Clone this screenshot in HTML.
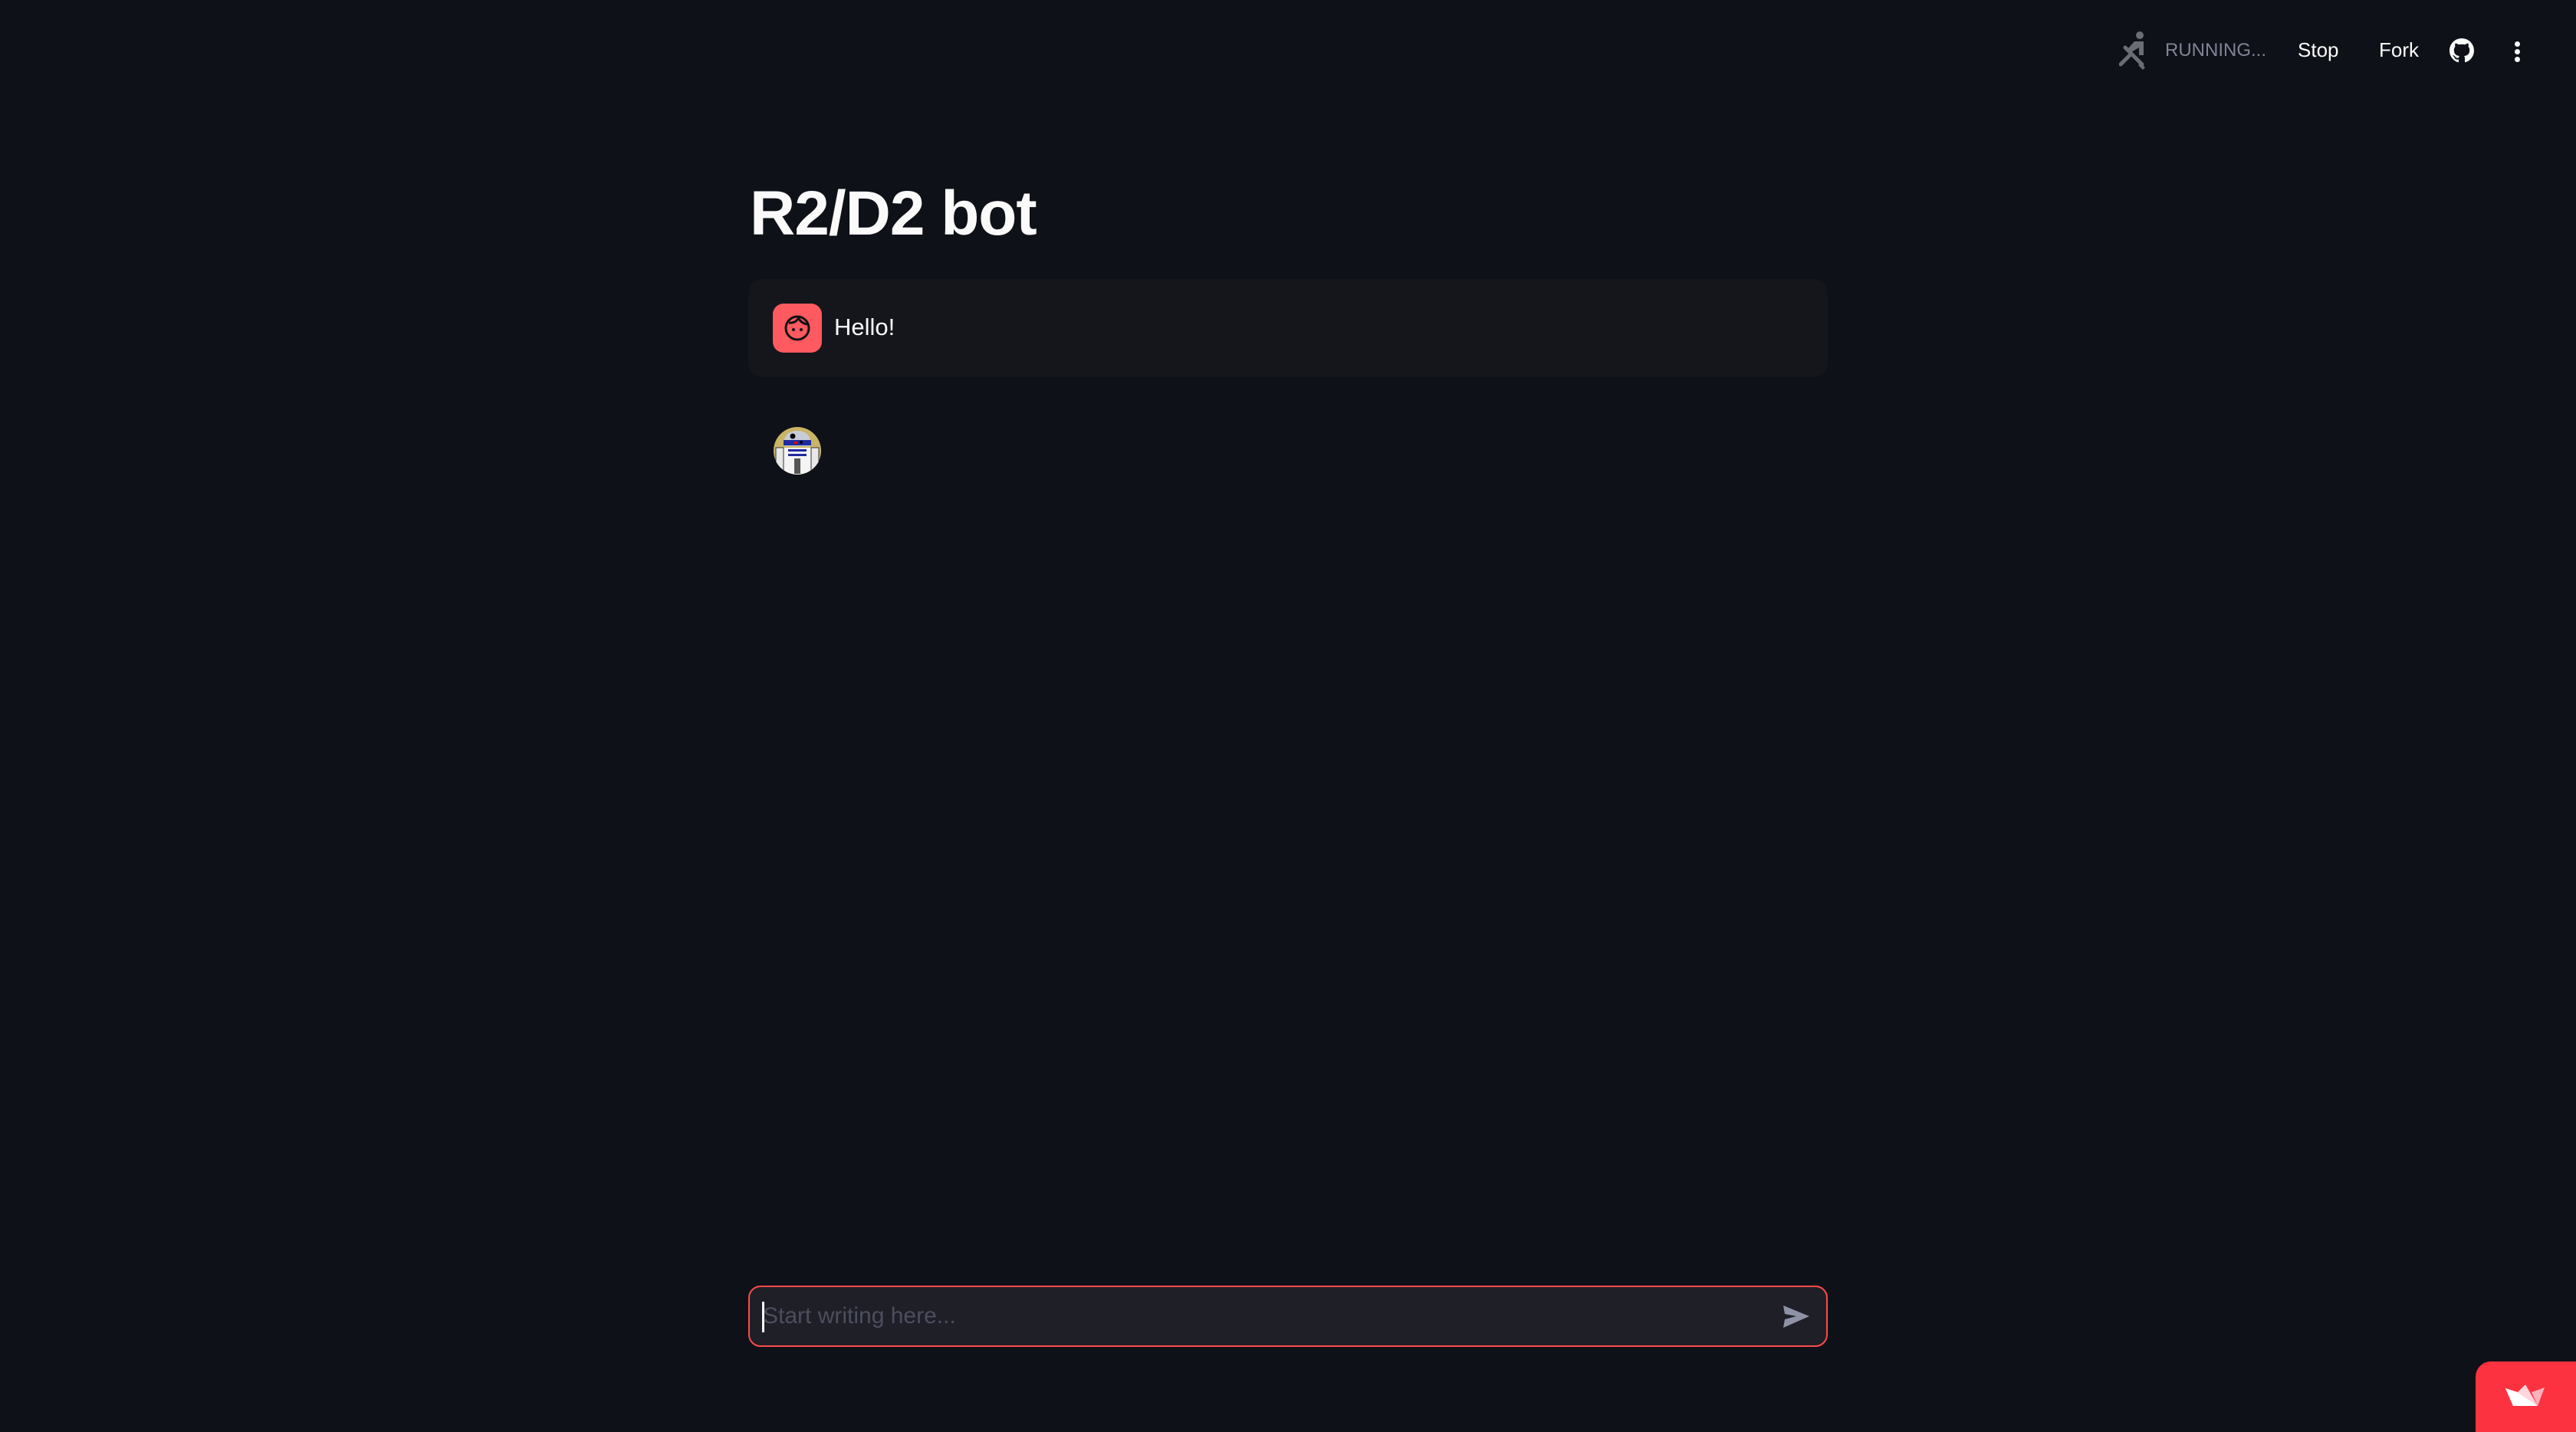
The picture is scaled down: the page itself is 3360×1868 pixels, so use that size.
<!DOCTYPE html>
<html><head><meta charset="utf-8"><style>
html,body{margin:0;padding:0;background:#0e1117;width:3360px;height:1868px;overflow:hidden;font-family:"Liberation Sans",sans-serif;}
.abs{position:absolute}
</style></head><body>
<!-- header -->
<svg class="abs" style="left:2764px;top:40px" width="40" height="54" viewBox="0 0 40 54">
<circle cx="27" cy="6" r="5" fill="#6b6d74"/>
<path d="M20 14 h12 v18 h-6 v-10 l-10 6 -4-5z" fill="#6b6d74"/>
<path d="M8 22 L30 44" stroke="#6b6d74" stroke-width="5" stroke-linecap="round"/>
<path d="M28 42 l6 6 -3 3 -6-6z" fill="#6b6d74"/>
<path d="M14 32 L2 44" stroke="#6b6d74" stroke-width="5" stroke-linecap="round"/>
</svg>
<div class="abs" style="left:2824px;top:52px;font-size:24px;color:#808495;">RUNNING...</div>
<div class="abs" style="left:2997px;top:50px;font-size:26px;color:#fafafa;">Stop</div>
<div class="abs" style="left:3103px;top:50px;font-size:26px;color:#fafafa;">Fork</div>
<svg class="abs" style="left:3195px;top:50px" width="32" height="32" viewBox="0 0 16 16"><path fill="#fafafa" d="M8 0C3.58 0 0 3.580 0 8c0 3.54 2.29 6.530 5.47 7.59.4.07.55-.17.55-.38 0-.19-.01-.82-.01-1.49-2.01.37-2.53-.49-2.69-.94-.09-.23-.48-.94-.82-1.13-.28-.15-.68-.52-.01-.53.63-.01 1.08.58 1.23.82.72 1.21 1.870.87 2.33.66.07-.52.28-.87.51-1.07-1.78-.2-3.64-.89-3.64-3.95 0-.87.31-1.59.82-2.15-.08-.2-.36-1.02.08-2.12 0 0 .67-.21 2.2.82.64-.18 1.32-.27 2-.27.68 0 1.36.09 2 .27 1.53-1.04 2.2-.82 2.2-.82.44 1.1.16 1.92.08 2.12.51.56.82 1.27.82 2.15 0 3.07-1.87 3.75-3.65 3.95.29.25.54.73.54 1.48 0 1.07-.01 1.93-.01 2.2 0 .21.15.46.55.38A8.013 8.013 0 0016 8c0-4.42-3.58-8-8-8z"/></svg>
<div class="abs" style="left:3280px;top:54px;width:7px;">
<div style="width:7px;height:7px;border-radius:50%;background:#fafafa;margin-bottom:3px"></div>
<div style="width:7px;height:7px;border-radius:50%;background:#fafafa;margin-bottom:3px"></div>
<div style="width:7px;height:7px;border-radius:50%;background:#fafafa"></div></div>
<!-- title -->
<div class="abs" style="left:978px;top:232px;font-size:82px;font-weight:bold;color:#fafafa;letter-spacing:-1px;">R2/D2 bot</div>
<!-- user message -->
<div class="abs" style="left:976px;top:364px;width:1408px;height:128px;border-radius:20px;background:#15161c;"></div>
<div class="abs" style="left:1008px;top:396px;width:64px;height:64px;border-radius:14px;background:#ff5a5f;"></div>
<svg class="abs" style="left:1020px;top:408px" width="40" height="40" viewBox="0 0 40 40">
<circle cx="20" cy="20" r="15" fill="none" stroke="#111" stroke-width="3"/>
<path d="M9 13 Q18 14 22 6" fill="none" stroke="#111" stroke-width="3"/>
<path d="M22 8 Q26 14 33 15" fill="none" stroke="#111" stroke-width="3"/>
<circle cx="15" cy="22" r="2" fill="#111"/><circle cx="25" cy="22" r="2" fill="#111"/>
</svg>
<div class="abs" style="left:1088px;top:409px;font-size:31px;color:#fafafa;">Hello!</div>
<!-- r2d2 avatar -->
<svg class="abs" style="left:1008px;top:556px" width="64" height="64" viewBox="0 0 64 64">
<defs><clipPath id="c"><circle cx="32" cy="32" r="31"/></clipPath></defs>
<circle cx="32" cy="32" r="31" fill="#c9b566"/>
<g clip-path="url(#c)">
<path d="M14 26 Q14 6 32 6 Q50 6 50 26z" fill="#c8ccd6"/>
<rect x="14" y="18" width="36" height="7" fill="#1f2aa0"/>
<circle cx="26" cy="13" r="3.5" fill="#000"/><rect x="28" y="20" width="4" height="3" fill="#e00"/><circle cx="37" cy="21" r="2" fill="#000"/>
<rect x="4" y="28" width="56" height="40" fill="#f4f4f4"/>
<rect x="4" y="28" width="10" height="40" fill="#e8e8e8" stroke="#333" stroke-width="1"/>
<rect x="50" y="28" width="10" height="40" fill="#e8e8e8" stroke="#333" stroke-width="1"/>
<rect x="20" y="30" width="24" height="3" fill="#1f2aa0"/>
<rect x="20" y="36" width="24" height="3" fill="#1f2aa0"/>
<rect x="28" y="42" width="8" height="20" fill="#555"/>
</g></svg>
<!-- input -->
<div class="abs" style="left:976px;top:1677px;width:1404px;height:76px;border:2px solid #ff4b4b;border-radius:16px;background:#1e1f27;"></div>
<div class="abs" style="left:994px;top:1698px;width:3px;height:40px;background:#fafafa;"></div>
<div class="abs" style="left:995px;top:1700px;font-size:30px;color:#4c4e5d;">Start writing here...</div>
<svg class="abs" style="left:2325px;top:1702px" width="36" height="32" viewBox="0 0 36 32"><path d="M1 1 L35 15 L1 30 L3 19 L18 15 L3 12z" fill="#8e92a6"/></svg>
<!-- badge -->
<div class="abs" style="left:3229px;top:1776px;width:131px;height:92px;background:#fc3240;border-top-left-radius:20px;"></div>
<svg class="abs" style="left:3268px;top:1806px" width="52" height="30" viewBox="0 0 52 30">
<path d="M0 5 L10 28 L42 28 Z" fill="#fff8f8"/>
<path d="M16 10 L26 0 L42 28 Z" fill="#ffd6dc"/>
<path d="M34 10 L51 4 L42 28 Z" fill="#ffb0ba"/>
<path d="M0 5 L16 10 L42 28 L10 28Z" fill="#fff"/>
</svg>
</body></html>
